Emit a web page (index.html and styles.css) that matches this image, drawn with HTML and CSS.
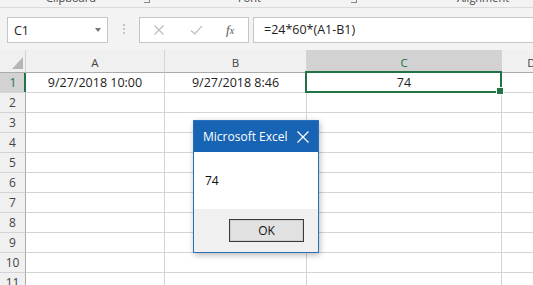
FILE: index.html
```html
<!DOCTYPE html>
<html>
<head>
<meta charset="utf-8">
<link rel="stylesheet" href="styles.css">
</head>
<body>
<div class="app">
  <div class="ribbon">
    <div class="labels">
      <span class="lbl lbl-clip">Clipboard</span>
      <span class="launch launch-1"></span>
      <span class="lbl lbl-font">Font</span>
      <span class="launch launch-2"></span>
      <span class="lbl lbl-align">Alignment</span>
    </div>
  </div>
  <div class="fbar">
    <div class="namebox"><span>C1</span><span class="caret"></span></div>
    <div class="grip"><i></i><i></i><i></i></div>
    <div class="fnbox">
      <svg class="ico" width="12" height="12" viewBox="0 0 12 12"><path d="M1.5 1.5 L10.5 10.5 M10.5 1.5 L1.5 10.5" stroke="#bdbdbd" stroke-width="1.2" fill="none"/></svg>
      <svg class="ico" width="13" height="12" viewBox="0 0 13 12"><path d="M1 6.5 L4.8 10 L12 1.8" stroke="#bdbdbd" stroke-width="1.2" fill="none"/></svg>
      <span class="fx">f<span class="fx-x">x</span></span>
    </div>
    <div class="finput">=24*60*(A1-B1)</div>
  </div>
  <div class="sheet">
    <div class="hd corner"><span class="tri"></span></div>
    <div class="hd">A</div>
    <div class="hd">B</div>
    <div class="hd hd-sel">C</div>
    <div class="hd">D</div>

    <div class="rh rh-sel">1</div>
    <div class="c">9/27/2018 10:00</div>
    <div class="c">9/27/2018 8:46</div>
    <div class="c sel">74</div>
    <div class="c"></div>

    <div class="rh">2</div><div class="c"></div><div class="c"></div><div class="c"></div><div class="c"></div>
    <div class="rh">3</div><div class="c"></div><div class="c"></div><div class="c"></div><div class="c"></div>
    <div class="rh">4</div><div class="c"></div><div class="c"></div><div class="c"></div><div class="c"></div>
    <div class="rh">5</div><div class="c"></div><div class="c"></div><div class="c"></div><div class="c"></div>
    <div class="rh">6</div><div class="c"></div><div class="c"></div><div class="c"></div><div class="c"></div>
    <div class="rh">7</div><div class="c"></div><div class="c"></div><div class="c"></div><div class="c"></div>
    <div class="rh">8</div><div class="c"></div><div class="c"></div><div class="c"></div><div class="c"></div>
    <div class="rh">9</div><div class="c"></div><div class="c"></div><div class="c"></div><div class="c"></div>
    <div class="rh">10</div><div class="c"></div><div class="c"></div><div class="c"></div><div class="c"></div>
    <div class="rh">11</div><div class="c"></div><div class="c"></div><div class="c"></div><div class="c"></div>
  </div>

  <div class="dialog">
    <div class="dlg-title">
      <span>Microsoft Excel</span>
      <svg class="dlg-close" width="12" height="12" viewBox="0 0 12 12"><path d="M0.5 0.5 L11.5 11.5 M11.5 0.5 L0.5 11.5" stroke="#fff" stroke-width="1.3" fill="none"/></svg>
    </div>
    <div class="dlg-body">74</div>
    <div class="dlg-foot"><div class="btn">OK</div></div>
  </div>
</div>
</body>
</html>
```

FILE: styles.css
```css
* { box-sizing: border-box; }
html, body { margin: 0; padding: 0; }
body {
  width: 533px;
  height: 285px;
  overflow: hidden;
  background: #fff;
  font-family: "Open Sans", "Noto Sans", sans-serif;
  color: #222;
}
.app { position: relative; width: 533px; height: 285px; overflow: hidden; }

/* ribbon remnant */
.ribbon {
  height: 8px;
  background: #f3f3f3;
  border-bottom: 1px solid #dadada;
  overflow: hidden;
}
.labels {
  display: flex;
  align-items: center;
  height: 12px;
  margin-top: -8px;
  padding-left: 46px;
  font-size: 11px;
  line-height: 12px;
  color: #444;
}
.lbl { white-space: nowrap; }
.lbl-font { margin-left: 88px; }
.lbl-align { margin-left: 100px; }
.launch {
  width: 6px; height: 6px;
  border-right: 1px solid #888;
  border-bottom: 1px solid #888;
  margin-top: 4px;
}
.launch-1 { margin-left: 48px; }
.launch-2 { margin-left: 90px; }

/* formula bar */
.fbar {
  display: flex;
  align-items: flex-start;
  height: 42px;
  padding: 9px 0 0 7px;
  background: #f3f3f3;
}
.namebox {
  display: flex;
  align-items: center;
  justify-content: space-between;
  width: 101px;
  height: 26px;
  padding: 0 6px 0 6px;
  background: #fff;
  border: 1px solid #c6c6c6;
  font-size: 12.5px;
  color: #222;
}
.caret {
  width: 0; height: 0;
  border-left: 3.5px solid transparent;
  border-right: 3.5px solid transparent;
  border-top: 4px solid #777;
}
.grip {
  display: flex;
  flex-direction: column;
  gap: 2px;
  margin: 7px 0 0 15px;
  width: 2px;
}
.grip i { display: block; width: 2px; height: 2px; background: #c3c3c3; }
.fnbox {
  display: flex;
  align-items: center;
  width: 110px;
  height: 26px;
  margin-left: 14px;
  padding-left: 13px;
  background: #fff;
  border: 1px solid #c6c6c6;
}
.ico { display: block; }
.ico + .ico { margin-left: 25px; }
.fx {
  margin-left: 23px;
  font-family: "Liberation Serif", "DejaVu Serif", serif;
  font-style: italic;
  font-size: 13px;
  color: #555;
}
.fx-x { font-size: 10px; }
.finput {
  flex: 1;
  height: 26px;
  margin-left: 4px;
  padding-left: 10px;
  background: #fff;
  border: 1px solid #c6c6c6;
  border-right: none;
  font-size: 12.5px;
  line-height: 24px;
  color: #222;
}

/* sheet */
.sheet {
  display: grid;
  grid-template-columns: 26px 139px 142px 195px 60px;
  grid-template-rows: 23px repeat(11, 20px);
}
.hd {
  display: flex;
  align-items: center;
  justify-content: center;
  background: #f0f0f0;
  border-right: 1px solid #d4d4d4;
  border-bottom: 1px solid #ababab;
  font-size: 11.5px;
  color: #444;
  padding-top: 2px;
}
.hd-sel { background: #d2d2d2; color: #217346; }
.corner { position: relative; }
.tri {
  position: absolute;
  right: 2px; bottom: 3px;
  width: 0; height: 0;
  border-left: 11px solid transparent;
  border-bottom: 12px solid #b6b6b6;
}
.rh {
  display: flex;
  align-items: center;
  justify-content: center;
  background: #f0f0f0;
  border-right: 1px solid #ababab;
  border-bottom: 1px solid #d4d4d4;
  font-size: 12px;
  color: #444;
}
.rh-sel { background: #d2d2d2; color: #217346; box-shadow: inset -2px 0 0 #217346; border-right: none; }
.c {
  display: flex;
  align-items: center;
  justify-content: center;
  border-right: 1px solid #d4d4d4;
  border-bottom: 1px solid #d4d4d4;
  font-size: 12.5px;
  color: #222;
  white-space: nowrap;
}
.sel { position: relative; }
.sel::before {
  content: "";
  position: absolute;
  left: -2px; top: -2px; right: -1px; bottom: -1px;
  border: 2px solid #217346;
}
.sel::after {
  content: "";
  position: absolute;
  right: -3px; bottom: -3px;
  width: 6px; height: 6px;
  background: #217346;
  border: 1px solid #fff;
}

/* dialog */
.dialog {
  position: absolute;
  left: 193px;
  top: 120px;
  width: 126px;
  height: 133px;
  display: flex;
  flex-direction: column;
  border: 1px solid #2a6fba;
  background: #fff;
  box-shadow: 1px 2px 6px rgba(0,0,0,0.28);
}
.dlg-title {
  display: flex;
  align-items: center;
  justify-content: space-between;
  height: 31px;
  padding: 0 9px 0 9px;
  background: #1764b4;
  color: #fff;
  font-size: 12px;
}
.dlg-close { display: block; margin-right: 0; }
.dlg-body {
  height: 57px;
  padding: 20px 0 0 11px;
  font-size: 12px;
  color: #111;
  background: #fff;
}
.dlg-foot {
  flex: 1;
  background: #f0f0f0;
  padding: 10px 0 0 35px;
}
.btn {
  width: 75px;
  height: 23px;
  display: flex;
  align-items: center;
  justify-content: center;
  background: #e1e1e1;
  border: 1px solid #3a3a3a;
  box-shadow: inset 0 0 0 1px #d0d0d0;
  font-size: 12px;
  color: #111;
}
```
